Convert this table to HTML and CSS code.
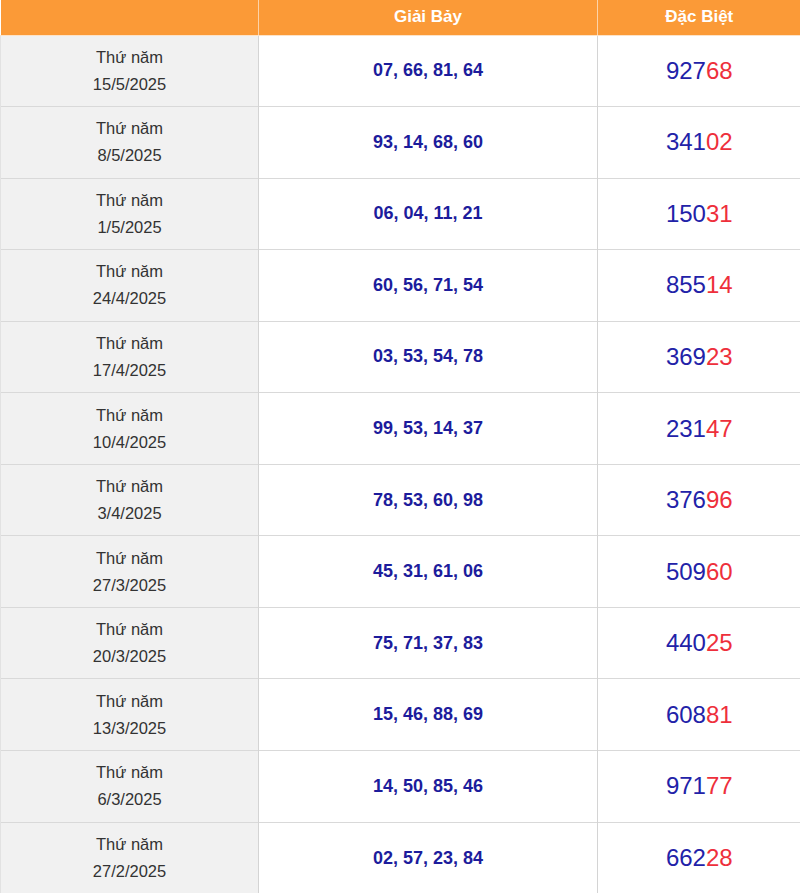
FILE: index.html
```html
<!DOCTYPE html>
<html lang="vi">
<head>
<meta charset="utf-8">
<title>Kết quả</title>
<link rel="stylesheet" href="styles.css">
</head>
<body>
<table class="kq">
  <colgroup>
    <col class="c-date">
    <col class="c-g7">
    <col class="c-db">
  </colgroup>
  <thead>
    <tr><th></th><th>Giải Bảy</th><th>Đặc Biệt</th></tr>
  </thead>
  <tbody>
    <tr><td class="date">Thứ năm<br>15/5/2025</td><td class="g7">07, 66, 81, 64</td><td class="db">927<span class="tail">68</span></td></tr>
    <tr><td class="date">Thứ năm<br>8/5/2025</td><td class="g7">93, 14, 68, 60</td><td class="db">341<span class="tail">02</span></td></tr>
    <tr><td class="date">Thứ năm<br>1/5/2025</td><td class="g7">06, 04, 11, 21</td><td class="db">150<span class="tail">31</span></td></tr>
    <tr><td class="date">Thứ năm<br>24/4/2025</td><td class="g7">60, 56, 71, 54</td><td class="db">855<span class="tail">14</span></td></tr>
    <tr><td class="date">Thứ năm<br>17/4/2025</td><td class="g7">03, 53, 54, 78</td><td class="db">369<span class="tail">23</span></td></tr>
    <tr><td class="date">Thứ năm<br>10/4/2025</td><td class="g7">99, 53, 14, 37</td><td class="db">231<span class="tail">47</span></td></tr>
    <tr><td class="date">Thứ năm<br>3/4/2025</td><td class="g7">78, 53, 60, 98</td><td class="db">376<span class="tail">96</span></td></tr>
    <tr><td class="date">Thứ năm<br>27/3/2025</td><td class="g7">45, 31, 61, 06</td><td class="db">509<span class="tail">60</span></td></tr>
    <tr><td class="date">Thứ năm<br>20/3/2025</td><td class="g7">75, 71, 37, 83</td><td class="db">440<span class="tail">25</span></td></tr>
    <tr><td class="date">Thứ năm<br>13/3/2025</td><td class="g7">15, 46, 88, 69</td><td class="db">608<span class="tail">81</span></td></tr>
    <tr><td class="date">Thứ năm<br>6/3/2025</td><td class="g7">14, 50, 85, 46</td><td class="db">971<span class="tail">77</span></td></tr>
    <tr><td class="date">Thứ năm<br>27/2/2025</td><td class="g7">02, 57, 23, 84</td><td class="db">662<span class="tail">28</span></td></tr>
  </tbody>
</table>
</body>
</html>
```
FILE: styles.css
```css
html, body {
  margin: 0;
  padding: 0;
  background: #ffffff;
}

body {
  font-family: "Liberation Sans", Arial, sans-serif;
}

.kq {
  width: 800px;
  border-collapse: collapse;
  table-layout: fixed;
}

.c-date { width: 258px; }
.c-g7 { width: 339px; }
.c-db { width: 203px; }

.kq th {
  background: #fb9a37;
  color: #ffffff;
  font-weight: bold;
  font-size: 17px;
  height: 35px;
  padding: 0;
  text-align: center;
  vertical-align: middle;
  border-left: 1px solid #fdd3a8;
  border-bottom: 1px solid #fde3c8;
  box-sizing: border-box;
}

.kq th:first-child {
  border-left: none;
}

.kq td {
  height: 71.55px;
  padding: 0;
  box-sizing: border-box;
  text-align: center;
  vertical-align: middle;
  border-top: 1px solid #d9d9d9;
  border-left: 1px solid #d4d4d4;
}

.kq tbody tr:first-child td {
  border-top: none;
}

.kq td.date {
  background: #f1f1f1;
  color: #333333;
  font-size: 16.5px;
  line-height: 27px;
  border-left: 1px solid #e2e2e2;
}

.kq td.g7 {
  color: #1c1c9c;
  font-weight: bold;
  font-size: 18px;
}

.kq td.db {
  color: #2222a8;
  font-size: 24px;
}

.tail {
  color: #ee2f3b;
}
```
